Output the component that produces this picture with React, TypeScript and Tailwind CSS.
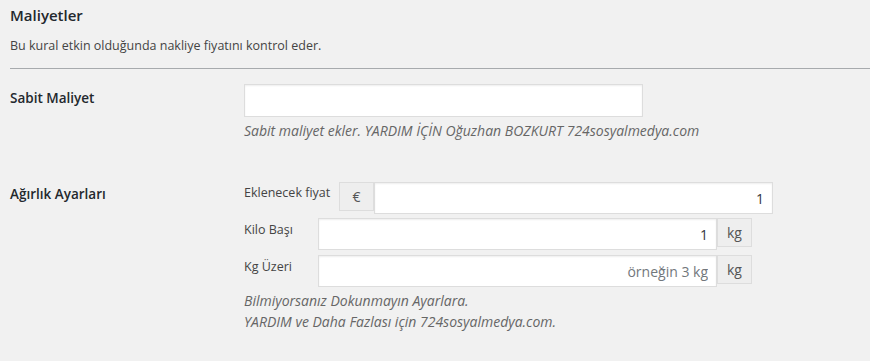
const font = { fontFamily: '"Open Sans", "Noto Sans", sans-serif' };

const Addon = ({ children }: { children: React.ReactNode }) => (
  <span className="flex h-[29px] w-[35px] shrink-0 items-center justify-center border border-[#dddddd] bg-[#eeeeee] text-[14px] text-[#555555]">
    {children}
  </span>
);

const NumberField = ({ width, value, placeholder }: { width: string; value?: string; placeholder?: string }) => (
  <input
    readOnly
    value={value}
    placeholder={placeholder}
    className={`h-[32px] ${width} border border-[#dddddd] bg-white px-2 text-right text-[14px] text-[#32373c] placeholder:text-[#72777c] shadow-[inset_0_1px_2px_rgba(0,0,0,0.07)] outline-none`}
  />
);

export default function App() {
  return (
    <div className="min-h-[361px] w-full bg-[#f1f1f1] text-[#444444]" style={font}>
      <div className="px-[10px] pt-[3px]">
        <h2 className="text-[15px] font-semibold leading-[24px] text-[#23282d]">Maliyetler</h2>
        <p className="mt-[9px] text-[12.5px] leading-[20px]">
          Bu kural etkin olduğunda nakliye fiyatını kontrol eder.
        </p>
      </div>

      <div className="ml-[10px] mt-[12px] border-t border-[#a7aaad]" />

      {/* Sabit Maliyet */}
      <div className="flex px-[10px] pt-[15px]">
        <div className="w-[234px] shrink-0 pt-[4px] text-[13.5px] font-semibold leading-[20px] text-[#23282d]">
          Sabit Maliyet
        </div>
        <div className="flex flex-col">
          <input
            readOnly
            className="h-[33px] w-[399px] border border-[#dddddd] bg-white px-2 text-[13px] shadow-[inset_0_1px_2px_rgba(0,0,0,0.07)] outline-none"
          />
          <p className="mt-[4px] text-[14px] italic leading-[20px] text-[#666666]">
            Sabit maliyet ekler. YARDIM İÇİN Oğuzhan BOZKURT 724sosyalmedya.com
          </p>
        </div>
      </div>

      {/* Ağırlık Ayarları */}
      <div className="flex px-[10px] pt-[41px]">
        <div className="w-[234px] shrink-0 pt-[2px] text-[13.5px] font-semibold leading-[20px] text-[#23282d]">
          Ağırlık Ayarları
        </div>
        <div className="flex flex-col">
          <div className="flex items-start">
            <span className="w-[95px] shrink-0 pt-[1px] text-[12.5px] leading-[20px]">Eklenecek fiyat</span>
            <Addon>€</Addon>
            <NumberField width="w-[399px]" value="1" />
          </div>
          <div className="mt-[4px] flex items-start">
            <span className="w-[74px] shrink-0 pt-[2px] text-[12.5px] leading-[20px]">Kilo Başı</span>
            <NumberField width="w-[399px]" value="1" />
            <Addon>kg</Addon>
          </div>
          <div className="mt-[5px] flex items-start">
            <span className="w-[74px] shrink-0 pt-[2px] text-[12.5px] leading-[20px]">Kg Üzeri</span>
            <NumberField width="w-[399px]" placeholder="örneğin 3 kg" />
            <Addon>kg</Addon>
          </div>
          <p className="mt-[3px] text-[14px] italic leading-[21px] text-[#666666]">
            Bilmiyorsanız Dokunmayın Ayarlara.
            <br />
            YARDIM ve Daha Fazlası için 724sosyalmedya.com.
          </p>
        </div>
      </div>
    </div>
  );
}
